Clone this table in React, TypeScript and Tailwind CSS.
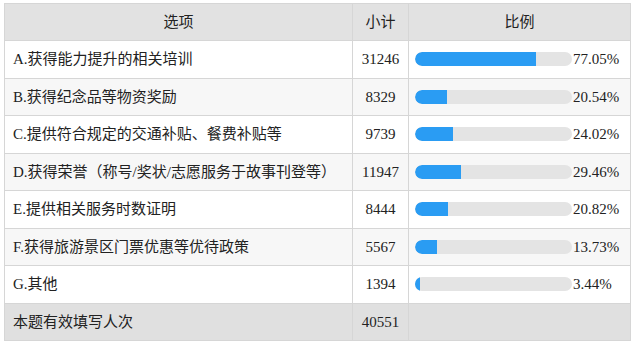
import React from "react";

const rows = [
  { label: "A.获得能力提升的相关培训", count: 31246, pct: 77.05 },
  { label: "B.获得纪念品等物资奖励", count: 8329, pct: 20.54 },
  { label: "C.提供符合规定的交通补贴、餐费补贴等", count: 9739, pct: 24.02 },
  { label: "D.获得荣誉（称号/奖状/志愿服务于故事刊登等）", count: 11947, pct: 29.46 },
  { label: "E.提供相关服务时数证明", count: 8444, pct: 20.82 },
  { label: "F.获得旅游景区门票优惠等优待政策", count: 5567, pct: 13.73 },
  { label: "G.其他", count: 1394, pct: 3.44 },
];

export default function App() {
  return (
    <div
      className="w-[636px] h-[343px] bg-white pt-[3px] pl-[4px]"
      style={{ fontFamily: '"Liberation Serif", "Noto Sans CJK SC", serif' }}
    >
      <table className="border-collapse text-[15px] text-[#222] w-[626px] table-fixed">
        <colgroup>
          <col className="w-[348px]" />
          <col className="w-[56px]" />
          <col className="w-[222px]" />
        </colgroup>
        <thead>
          <tr className="h-[37px] bg-[#e2e2e2]">
            <th className="border border-[#d6d6d6] font-normal text-center">选项</th>
            <th className="border border-[#d6d6d6] font-normal text-center">小计</th>
            <th className="border border-[#d6d6d6] font-normal text-center">比例</th>
          </tr>
        </thead>
        <tbody>
          {rows.map((r, i) => (
            <tr key={i} className={i % 2 === 1 ? "h-[37.5px] bg-[#f7f7f7]" : "h-[37.5px] bg-white"}>
              <td className="border border-[#d6d6d6] pl-[8px] whitespace-nowrap">{r.label}</td>
              <td className="border border-[#d6d6d6] text-center">{r.count}</td>
              <td className="border border-[#d6d6d6] pl-[6px]">
                <div className="flex items-center">
                  <div className="w-[157px] h-[14px] rounded-full bg-[#e4e4e4] overflow-hidden shrink-0">
                    <div
                      className="h-full bg-[#2a9cf3] rounded-l-full"
                      style={{ width: `${r.pct}%` }}
                    />
                  </div>
                  <span className="ml-px">{r.pct.toFixed(2)}%</span>
                </div>
              </td>
            </tr>
          ))}
          <tr className="h-[37.5px] bg-[#e0e0e0]">
            <td className="border border-[#d6d6d6] pl-[8px]">本题有效填写人次</td>
            <td className="border border-[#d6d6d6] text-center">40551</td>
            <td className="border border-[#d6d6d6]"></td>
          </tr>
        </tbody>
      </table>
    </div>
  );
}
